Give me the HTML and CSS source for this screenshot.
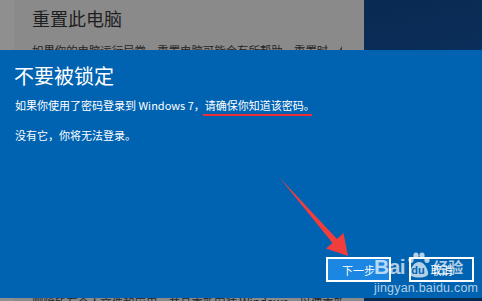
FILE: index.html
```html
<!DOCTYPE html>
<html lang="zh-CN">
<head>
<meta charset="utf-8">
<title>不要被锁定</title>
<link rel="stylesheet" href="styles.css">
</head>
<body>
<div class="screen">
  <div class="strip"></div>
  <div class="panel">
    <h1 class="panel-title">重置此电脑</h1>
    <p class="panel-text">如果你的电脑运行异常，重置电脑可能会有所帮助。重置时，你可以选择保留个人文件或删除个人文件。</p>
    <p class="panel-text panel-low">删除所有个人文件和应用，并且重新安装 Windows，以便重新开始使用</p>
  </div>
  <div class="desktop"></div>

  <section class="dialog">
    <h2 class="dialog-title">不要被锁定</h2>
    <p class="dialog-text">如果你使用了密码登录到 Windows 7，<span class="marked">请确保你知道该密码</span>。</p>
    <p class="dialog-text second">没有它，你将无法登录。</p>
    <div class="actions">
      <button class="btn primary">下一步</button>
      <button class="btn">取消</button>
    </div>
  </section>

  <svg class="arrow" width="482" height="301" viewBox="0 0 482 301">
    <polygon points="279,177 337,239 343.5,233 348,256 326,248.5 332.5,243" fill="#f23d3d"/>
  </svg>

  <div class="watermark">
    <div class="wm-row">
      <span class="wm-bai">Bai</span>
      <span class="wm-paw">
        <svg width="24" height="26" viewBox="0 0 24 26">
          <ellipse cx="4" cy="8" rx="2.6" ry="3" fill="rgba(255,255,255,0.7)"/>
          <ellipse cx="9" cy="3.5" rx="2.6" ry="3" fill="rgba(255,255,255,0.7)"/>
          <ellipse cx="15" cy="3.5" rx="2.6" ry="3" fill="rgba(255,255,255,0.7)"/>
          <ellipse cx="20" cy="8" rx="2.6" ry="3" fill="rgba(255,255,255,0.7)"/>
          <path d="M12 10 C7 10 4 16 3 20 C2 24 6 25.5 12 25.5 C18 25.5 22 24 21 20 C20 16 17 10 12 10 Z" fill="rgba(255,255,255,0.7)"/>
        </svg>
        <span class="wm-du">du</span>
      </span>
      <span class="wm-jy">经验</span>
    </div>
    <div class="wm-url">jingyan.baidu.com</div>
  </div>
</div>
</body>
</html>
```
FILE: styles.css
```css
html, body {
  margin: 0;
  padding: 0;
}
body {
  width: 482px;
  height: 301px;
  overflow: hidden;
  font-family: "Noto Sans CJK SC", "Noto Sans", sans-serif;
}
.screen {
  position: relative;
  width: 482px;
  height: 301px;
  display: flex;
  overflow: hidden;
}
.strip {
  width: 14px;
  background: #8f8f8f;
}
.panel {
  width: 350px;
  background: #8a8a8a;
  padding: 6px 0 0 18px;
  box-sizing: border-box;
  color: #242424;
}
.panel-title {
  margin: 0;
  font-size: 18px;
  line-height: 24px;
  font-weight: 400;
  color: #1e1e1e;
}
.panel-text {
  margin: 13px 0 0;
  font-size: 11.4px;
  line-height: 15px;
  white-space: nowrap;
  overflow: hidden;
  width: 310px;
}
.panel-low {
  margin-top: 237px;
}
.desktop {
  flex: 1;
  background: linear-gradient(167deg, #092a51 0%, #0b2f5c 28%, #15467f 37%, #0f3969 46%, #0a2d57 70%, #09294f 100%);
}
.dialog {
  position: absolute;
  left: 0;
  top: 50px;
  width: 482px;
  height: 248px;
  box-sizing: border-box;
  background: #0063b1;
  color: #ffffff;
  padding: 14px 8px 16px 14px;
  display: flex;
  flex-direction: column;
}
.dialog-title {
  margin: 0;
  font-size: 20px;
  line-height: 24px;
  font-weight: 400;
}
.dialog-text {
  margin: 10px 0 0 1px;
  font-size: 11px;
  line-height: 15px;
}
.dialog-text.second {
  margin-top: 15px;
}
.marked {
  position: relative;
}
.marked::after {
  content: "";
  position: absolute;
  left: -2px;
  right: -8px;
  bottom: -3px;
  height: 2px;
  background: #ee2e37;
}
.actions {
  margin-top: auto;
  display: flex;
  justify-content: flex-end;
  gap: 18px;
}
.btn {
  width: 65px;
  height: 25px;
  box-sizing: border-box;
  border: 2px solid #ffffff;
  background: transparent;
  color: #ffffff;
  font-family: "Noto Sans CJK SC", sans-serif;
  font-size: 11px;
  padding: 0;
}
.btn.primary {
  background: #1b87e3;
}
.arrow {
  position: absolute;
  left: 0;
  top: 0;
}
.watermark {
  position: absolute;
  left: 374px;
  top: 251px;
  color: rgba(255, 255, 255, 0.7);
  font-family: "Liberation Sans", Arial, sans-serif;
}
.wm-row {
  display: flex;
  align-items: flex-end;
  height: 27px;
}
.wm-bai {
  font-size: 21px;
  font-weight: 700;
  line-height: 22px;
  letter-spacing: -0.5px;
}
.wm-paw {
  position: relative;
  width: 24px;
  height: 26px;
  margin-left: 2px;
}
.wm-paw svg {
  display: block;
}
.wm-du {
  position: absolute;
  left: 4px;
  top: 12px;
  font-size: 11px;
  font-weight: 700;
  line-height: 12px;
  color: #0063b1;
}
.wm-jy {
  margin-left: 2px;
  font-family: "Noto Sans CJK SC", sans-serif;
  font-size: 15px;
  line-height: 22px;
  font-weight: 700;
}
.wm-url {
  margin-top: 3px;
  font-size: 12.5px;
  line-height: 14px;
  letter-spacing: 0.2px;
}
```
